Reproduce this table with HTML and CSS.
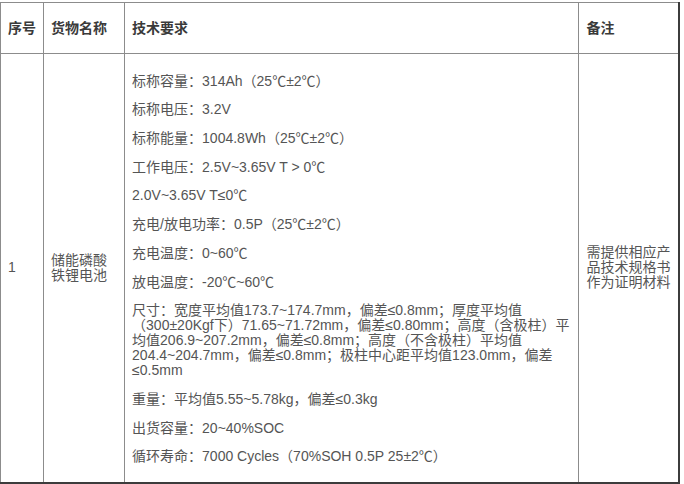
FILE: index.html
```html
<!DOCTYPE html>
<html lang="zh-CN">
<head>
<meta charset="utf-8">
<title>技术要求</title>
<link rel="stylesheet" href="styles.css">
</head>
<body>
<table class="spec">
  <colgroup>
    <col class="c-no">
    <col class="c-name">
    <col class="c-req">
    <col class="c-note">
  </colgroup>
  <thead>
    <tr class="head">
      <th>序号</th>
      <th>货物名称</th>
      <th>技术要求</th>
      <th>备注</th>
    </tr>
  </thead>
  <tbody>
    <tr>
      <td>1</td>
      <td>储能磷酸铁锂电池</td>
      <td class="req">
        <p>标称容量：314Ah（25℃±2℃）</p>
        <p>标称电压：3.2V</p>
        <p>标称能量：1004.8Wh（25℃±2℃）</p>
        <p>工作电压：2.5V~3.65V T &gt; 0℃</p>
        <p>2.0V~3.65V T≤0℃</p>
        <p>充电/放电功率：0.5P（25℃±2℃）</p>
        <p>充电温度：0~60℃</p>
        <p>放电温度：-20℃~60℃</p>
        <p>尺寸：宽度平均值173.7~174.7mm，偏差≤0.8mm；厚度平均值<br>（300±20Kgf下）71.65~71.72mm，偏差≤0.80mm；高度（含极柱）平<br>均值206.9~207.2mm，偏差≤0.8mm；高度（不含极柱）平均值<br>204.4~204.7mm，偏差≤0.8mm；极柱中心距平均值123.0mm，偏差<br>≤0.5mm</p>
        <p>重量：平均值5.55~5.78kg，偏差≤0.3kg</p>
        <p>出货容量：20~40%SOC</p>
        <p>循环寿命：7000 Cycles（70%SOH 0.5P 25±2℃）</p>
      </td>
      <td>需提供相应产品技术规格书作为证明材料</td>
    </tr>
  </tbody>
</table>
</body>
</html>
```

FILE: styles.css
```css
html, body {
  margin: 0;
  padding: 0;
  background: #ffffff;
}

body {
  padding-top: 2px;
  font-family: "Liberation Sans", "Noto Sans CJK SC", sans-serif;
  font-size: 14px;
  line-height: 15px;
  color: #555555;
}

.spec {
  border-collapse: collapse;
  table-layout: fixed;
  width: 680px;
  border-right: 2px solid #3c3c3c;
  border-bottom: 2px solid #3c3c3c;
}

.c-no { width: 43px; }
.c-name { width: 81px; }
.c-req { width: 454px; }
.c-note { width: 100px; }

.spec th,
.spec td {
  border: 1px solid #8c8c8c;
  padding: 5px 7px;
  text-align: left;
  vertical-align: middle;
}

.spec th {
  height: 40px;
  font-weight: bold;
  color: #3a3a3a;
}

.spec td.req {
  padding: 6px 7px 4px;
}

.spec td.req p {
  margin: 13.7px 0;
}
```
